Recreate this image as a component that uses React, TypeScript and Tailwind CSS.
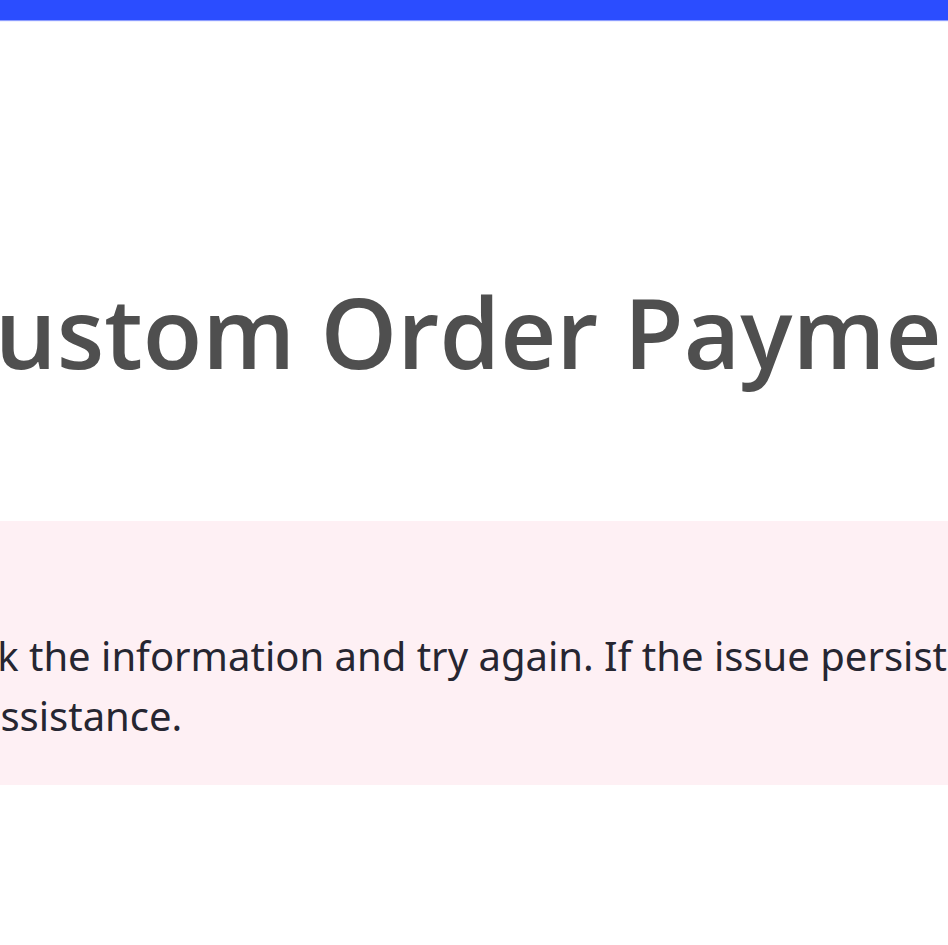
import React from "react";

export default function App() {
  return (
    <div className="w-[948px] h-[945px] overflow-hidden bg-white">
      <div className="h-[20px] bg-[#2b4dff]" />
      <div className="h-[1px] bg-[#8d9dff]" />
      <div className="h-[1px] bg-[#eef0ff]" />
      <div className="mt-[242px] whitespace-nowrap -ml-[67px]">
        <h1
          className="text-[97.5px] leading-[136px] font-semibold text-[#4f4f4f]"
          style={{ fontFamily: '"Open Sans", sans-serif' }}
        >
          Custom Order Payment
        </h1>
      </div>
      <div className="mt-[121px] h-[264px] bg-[#fef0f4] pt-[105px] -ml-[22px] pr-[22px]">
        <p
          className="text-[40px] leading-[60px] text-[#262631] whitespace-nowrap"
          style={{ fontFamily: '"Noto Sans", sans-serif' }}
        >
          ck the information and try again. If the issue persists, please contact us for
          <br />
          assistance.
        </p>
      </div>
    </div>
  );
}
